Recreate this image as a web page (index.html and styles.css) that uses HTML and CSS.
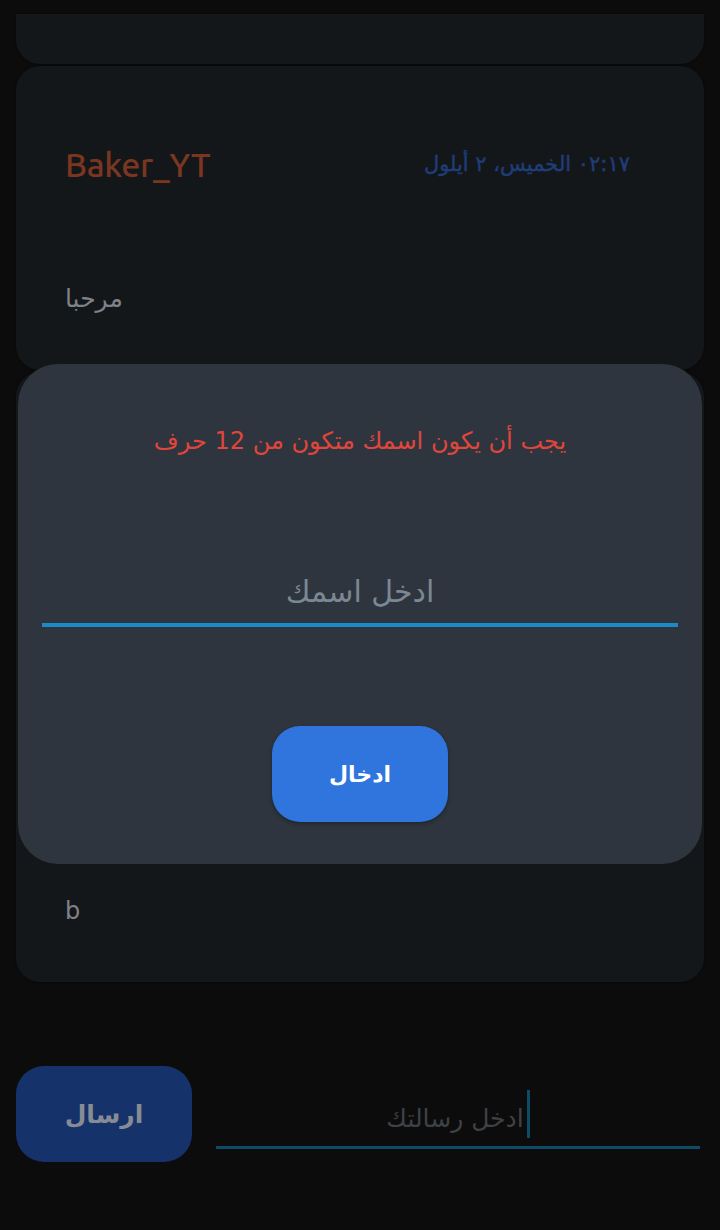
FILE: index.html
```html
<!DOCTYPE html>
<html lang="ar">
<head>
<meta charset="utf-8">
<link rel="stylesheet" href="styles.css">
</head>
<body>
<div class="screen">
  <div class="list">
    <div class="card card-top"></div>
    <div class="card card-msg">
      <div class="msg-head">
        <span class="author">Baker_YT</span>
        <span class="date" dir="rtl">٠٢:١٧ الخميس، ٢ أيلول</span>
      </div>
      <div class="msg-body" dir="rtl">مرحبا</div>
    </div>
    <div class="card card-msg2">
      <div class="msg-body2">b</div>
    </div>
  </div>
  <div class="composer">
    <button class="send">ارسال</button>
    <div class="field">
      <span class="placeholder" dir="rtl">ادخل رسالتك</span><span class="cursor"></span>
    </div>
  </div>

  <div class="dialog">
    <div class="error" dir="rtl">يجب أن يكون اسمك متكون من 12 حرف</div>
    <div class="name-field">
      <span class="name-placeholder" dir="rtl">ادخل اسمك</span>
    </div>
    <button class="enter">ادخال</button>
  </div>
</div>
</body>
</html>
```

FILE: styles.css
```css
* { box-sizing: border-box; }
html, body {
  margin: 0;
  padding: 0;
  background: #0c0c0c;
}
body {
  width: 720px;
  height: 1230px;
  overflow: hidden;
  font-family: "DejaVu Sans", "Noto Sans", sans-serif;
}
.screen {
  position: relative;
  width: 720px;
  height: 1230px;
  padding: 14px 16px 0;
}
.list {
  display: flex;
  flex-direction: column;
  gap: 2px;
}
.card {
  background: #14171a;
  border-radius: 24px;
  box-shadow: 0 0 2px rgba(0,0,0,0.8);
}
.card-top {
  height: 50px;
  border-radius: 0 0 24px 24px;
}
.card-msg {
  height: 304px;
  padding: 78px 74px 0 49px;
}
.msg-head {
  display: flex;
  justify-content: space-between;
  align-items: center;
  height: 40px;
}
.author {
  font-family: "Ubuntu", "Open Sans", "DejaVu Sans", sans-serif;
  font-size: 34px;
  font-weight: 500;
  color: #7b3621;
  letter-spacing: -0.3px;
}
.date {
  font-size: 21px;
  font-weight: normal;
  color: #1f3d78;
  -webkit-text-stroke: 0.4px #1f3d78;
}
.msg-body {
  margin-top: 100px;
  font-size: 25px;
  color: #7f8387;
  direction: rtl;
  width: max-content;
}
.card-msg2 {
  height: 610px;
  padding: 525px 0 0 49px;
}
.msg-body2 {
  font-family: "DejaVu Sans", sans-serif;
  font-size: 24px;
  color: #7f8387;
}
.composer {
  margin-top: 84px;
  display: flex;
  align-items: flex-start;
  gap: 24px;
}
.send {
  width: 176px;
  height: 96px;
  border: none;
  border-radius: 28px;
  background: #16326a;
  color: #878c94;
  font-family: "DejaVu Sans", sans-serif;
  font-size: 25px;
  font-weight: bold;
}
.field {
  flex: 1;
  margin-right: 4px;
  height: 83px;
  border-bottom: 3px solid #0f4a66;
  display: flex;
  direction: ltr;
  justify-content: center;
  align-items: flex-end;
  padding-bottom: 8px;
}
.placeholder {
  font-size: 25px;
  color: #3e4246;
  line-height: 38px;
}
.cursor {
  width: 3px;
  height: 48px;
  background: #0f4a66;
  margin-left: 3px;
}

.dialog {
  position: absolute;
  left: 18px;
  top: 364px;
  width: 684px;
  height: 500px;
  background: #2e353e;
  border-radius: 40px;
  display: flex;
  flex-direction: column;
  align-items: center;
  padding: 59px 24px 0;
}
.error {
  font-size: 24px;
  color: #e0463b;
  line-height: 36px;
}
.name-field {
  margin-top: 113px;
  width: 636px;
  height: 55px;
  border-bottom: 4px solid #1a8bc6;
  display: flex;
  justify-content: center;
  align-items: flex-start;
}
.name-placeholder {
  font-size: 30px;
  color: #7b8894;
  line-height: 40px;
}
.enter {
  margin-top: 99px;
  width: 176px;
  height: 96px;
  border: none;
  border-radius: 28px;
  background: #2f75dd;
  color: #ffffff;
  font-family: "DejaVu Sans", sans-serif;
  font-size: 22px;
  font-weight: bold;
  box-shadow: 0 2px 4px rgba(0,0,0,0.3);
}
```
